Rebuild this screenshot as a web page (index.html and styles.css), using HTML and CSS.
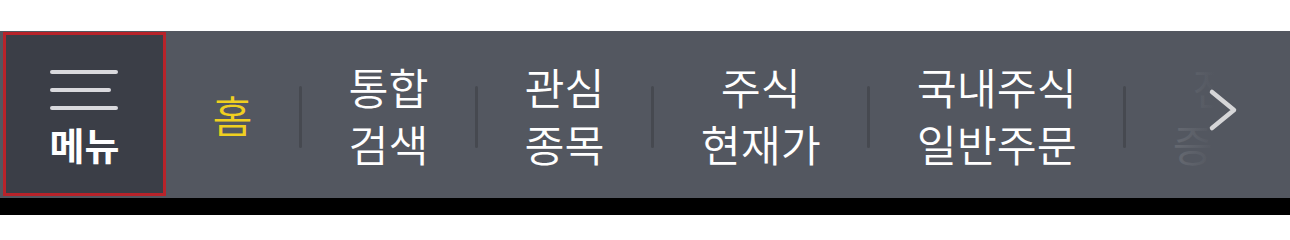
FILE: index.html
```html
<!DOCTYPE html>
<html lang="ko">
<head>
<meta charset="utf-8">
<title>메뉴</title>
<link rel="stylesheet" href="styles.css">
</head>
<body>
<div class="top-space"></div>
<nav class="tabbar">
  <div class="menu-cell">
    <div class="menu-box">
      <svg class="burger" width="70" height="40" viewBox="0 0 70 40">
        <line x1="2" y1="2" x2="66" y2="2" />
        <line x1="2" y1="20" x2="59" y2="20" />
        <line x1="2" y1="38" x2="66" y2="38" />
      </svg>
      <span class="menu-label">메뉴</span>
    </div>
  </div>
  <div class="tabs">
    <div class="tab active"><span>홈</span></div>
    <div class="sep"></div>
    <div class="tab"><span>통합<br>검색</span></div>
    <div class="sep"></div>
    <div class="tab"><span>관심<br>종목</span></div>
    <div class="sep"></div>
    <div class="tab"><span>주식<br>현재가</span></div>
    <div class="sep"></div>
    <div class="tab"><span>국내주식<br>일반주문</span></div>
    <div class="sep"></div>
    <div class="tab"><span>잔고<br>증거금</span></div>
  </div>
  <div class="fade">
    <svg class="chev" width="40" height="50" viewBox="0 0 40 50">
      <polyline points="10,7 32,25 10,43" />
    </svg>
  </div>
</nav>
<div class="bottom-space"></div>
</body>
</html>
```
FILE: styles.css
```css
html, body {
  margin: 0;
  padding: 0;
  background: #ffffff;
  font-family: "Noto Sans CJK KR", "Noto Sans", sans-serif;
}

.top-space {
  height: 31px;
  background: #ffffff;
}

.bottom-space {
  height: 17px;
  background: #000000;
}

.tabbar {
  position: relative;
  display: flex;
  height: 167px;
  background: #535760;
  overflow: hidden;
}

.menu-cell {
  flex: 0 0 auto;
  padding: 1px 0 2px 3px;
}

.menu-box {
  box-sizing: border-box;
  width: 163px;
  height: 164px;
  background: #3b3e47;
  border: 3px solid #b8232a;
  display: flex;
  flex-direction: column;
  align-items: center;
  padding-top: 35px;
}

.burger {
  display: block;
  margin-left: 0;
}

.burger line {
  stroke: #d9d9dd;
  stroke-width: 4;
  stroke-linecap: round;
}

.menu-label {
  margin-top: 12px;
  color: #ffffff;
  font-size: 38px;
  font-weight: 700;
  line-height: 44px;
}

.tabs {
  display: flex;
  align-items: center;
  flex: 0 0 auto;
  white-space: nowrap;
}

.tab {
  padding: 0 46.5px;
  color: #ffffff;
  font-size: 43.5px;
  font-weight: 350;
  line-height: 57px;
  text-align: center;
}

.tab.active {
  color: #f0d020;
}

.sep {
  width: 3px;
  height: 62px;
  margin-top: 4px;
  background: #464950;
  border-radius: 1.5px;
}

.fade {
  position: absolute;
  top: 0;
  right: 0;
  width: 158px;
  height: 100%;
  background: linear-gradient(to right, rgba(83, 87, 96, 0.84), rgba(83, 87, 96, 0.9) 30%, #535760 52%);
  display: flex;
  align-items: center;
}

.chev {
  display: block;
  margin-left: 70px;
  margin-top: -9px;
}

.chev polyline {
  fill: none;
  stroke: #d6d6d8;
  stroke-width: 4.5;
  stroke-linecap: round;
  stroke-linejoin: round;
}
```
